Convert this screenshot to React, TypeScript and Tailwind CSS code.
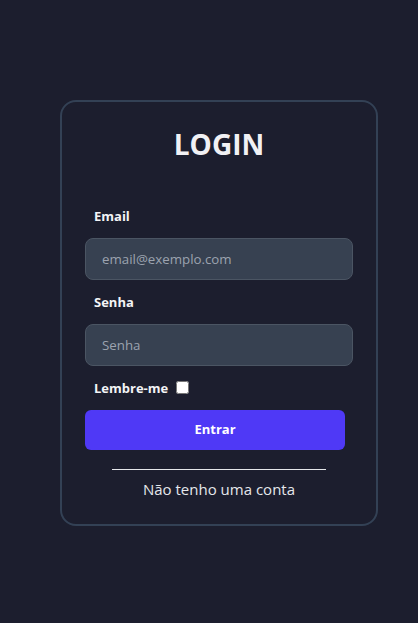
export default function App() {
  return (
    <div className="flex min-h-screen items-center justify-center bg-[#1c1e2e] pt-0.5 pl-5 font-['Open_Sans','Lato',sans-serif]">
      <form
        onSubmit={(e) => e.preventDefault()}
        className="flex w-[318px] flex-col rounded-2xl border-2 border-[#334155] px-[23px] pt-6 pb-[25px]"
      >
        <h1 className="text-center text-[28px] font-bold leading-[36px] text-[#f1f1f4]">LOGIN</h1>

        <label className="mt-[46px] pl-[9px] text-[13px] font-bold leading-4 text-[#f3f4f6]">Email</label>
        <input
          type="email"
          placeholder="email@exemplo.com"
          className="mt-[14px] h-[42px] w-full rounded-lg border border-[#4b5563] bg-[#374151] px-4 text-[13.3px] text-white outline-none placeholder:text-[#9ca3af]"
        />

        <label className="mt-[14px] pl-[9px] text-[13px] font-bold leading-4 text-[#f3f4f6]">Senha</label>
        <input
          type="password"
          placeholder="Senha"
          className="mt-[14px] h-[42px] w-full rounded-lg border border-[#4b5563] bg-[#374151] px-4 text-[13.3px] text-white outline-none placeholder:text-[#9ca3af]"
        />

        <label className="mt-[14px] flex items-center gap-2 pl-[9px] text-[13px] font-bold leading-4 text-[#f3f4f6]">
          Lembre-me
          <input type="checkbox" className="h-[13px] w-[13px]" />
        </label>

        <button
          type="submit"
          className="mt-[14px] h-10 w-[260px] rounded-md bg-[#4f39f6] text-[13px] font-bold text-white"
        >
          Entrar
        </button>

        <div className="mx-auto mt-[19px] h-px w-[214px] bg-[#e5e7eb]" />
        <a href="#" className="mt-[9px] text-center text-[15px] leading-5 text-[#e5e7eb]">
          Não tenho uma conta
        </a>
      </form>
    </div>
  );
}
